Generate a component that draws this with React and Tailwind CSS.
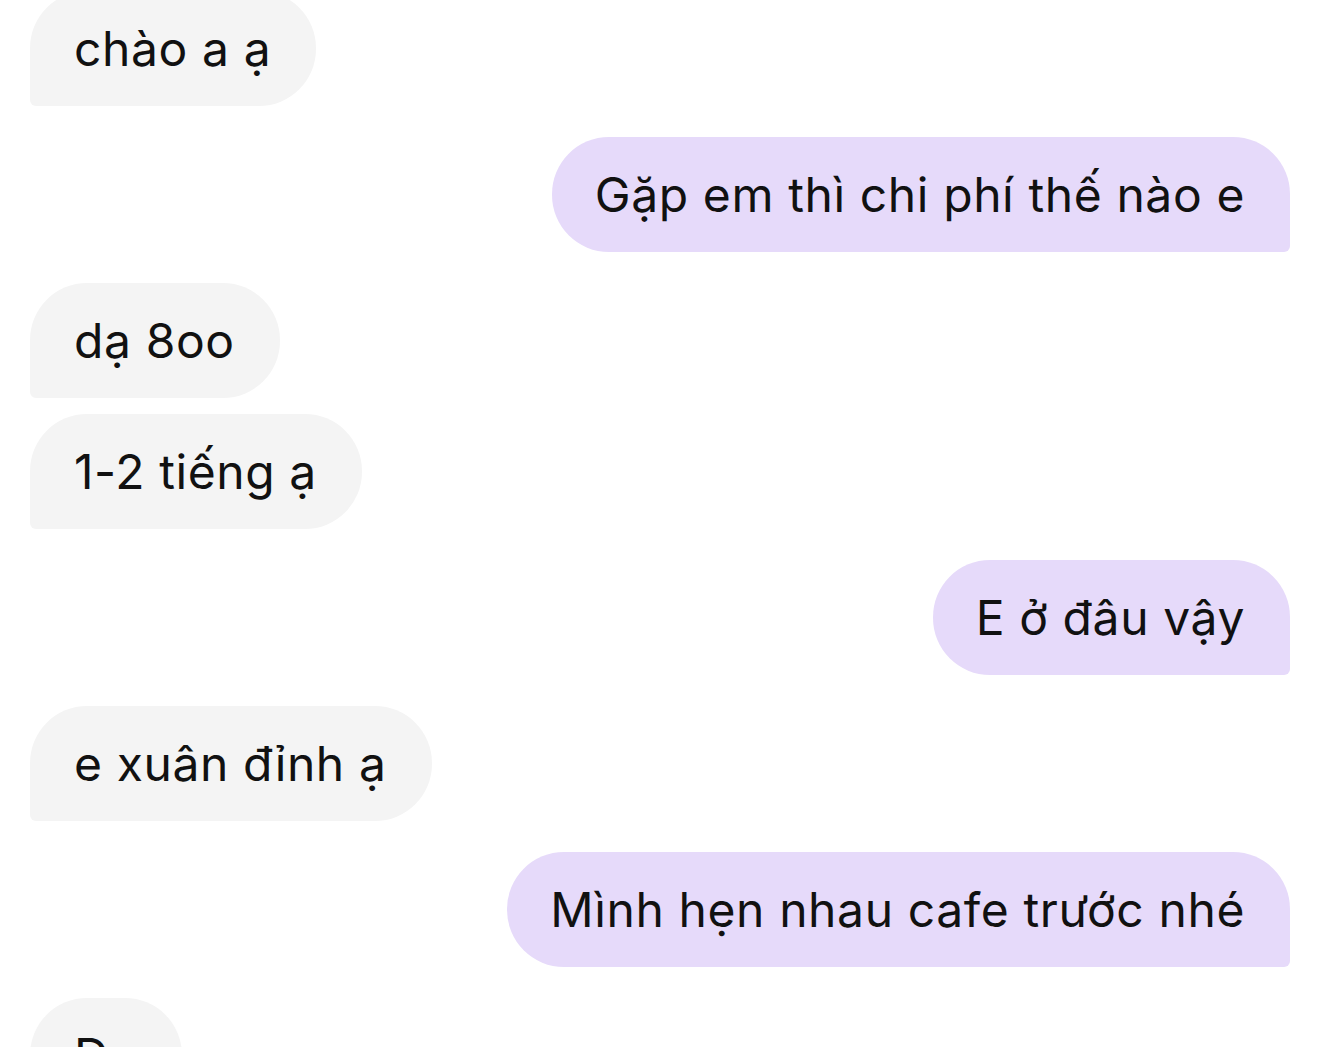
import React from "react";

const msgs = [
  { t: "chào a ạ", me: false, gap: 0 },
  { t: "Gặp em thì chi phí thế nào e", me: true, gap: 31 },
  { t: "dạ 8oo", me: false, gap: 31 },
  { t: "1-2 tiếng ạ", me: false, gap: 16 },
  { t: "E ở đâu vậy", me: true, gap: 31 },
  { t: "e xuân đỉnh ạ", me: false, gap: 31 },
  { t: "Mình hẹn nhau cafe trước nhé", me: true, gap: 31 },
  { t: "Dạ", me: false, gap: 31 },
];

export default function App() {
  return (
    <div
      className="w-[1320px] h-[1047px] overflow-hidden bg-white px-[30px] pt-0"
      style={{ fontFamily: "Inter, 'Noto Sans', sans-serif" }}
    >
      <div className="-mt-[9px] flex flex-col">
        {msgs.map((m, i) => (
          <div
            key={i}
            className={m.me ? "flex justify-end" : "flex justify-start"}
            style={{ marginTop: m.gap }}
          >
            <div
              className={
                m.me
                  ? "h-[115px] flex items-center pl-[43px] pr-[45px] bg-[#e6dafa] rounded-[57px] rounded-br-[6px] text-[48px] text-[#111] tracking-[0.6px] whitespace-nowrap"
                  : "h-[115px] flex items-center pl-[44px] pr-[45px] bg-[#f4f4f4] rounded-[57px] rounded-bl-[6px] text-[48px] text-[#111] tracking-[0.6px] whitespace-nowrap"
              }
            >
              {m.t}
            </div>
          </div>
        ))}
      </div>
    </div>
  );
}
